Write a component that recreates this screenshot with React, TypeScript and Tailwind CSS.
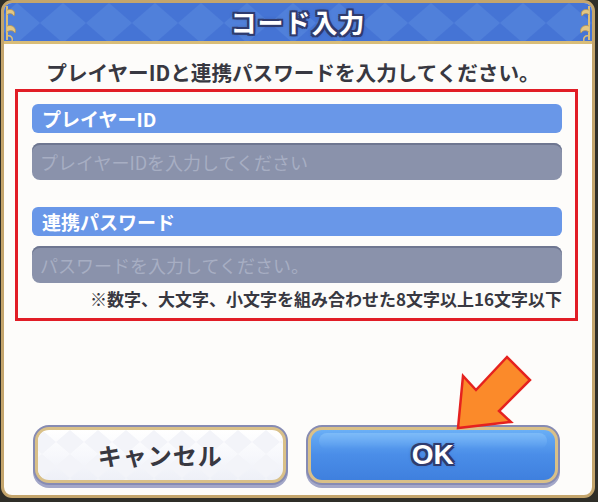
const outline =
  "[text-shadow:2px_0_0_#2f3b6e,-2px_0_0_#2f3b6e,0_2px_0_#2f3b6e,0_-2px_0_#2f3b6e,2px_2px_0_#2f3b6e,-2px_-2px_0_#2f3b6e,2px_-2px_0_#2f3b6e,-2px_2px_0_#2f3b6e,0_0_4px_#2f3b6e]";

function Ornament({ flip }: { flip?: boolean }) {
  return (
    <svg
      width="16"
      height="38"
      viewBox="0 0 16 38"
      className={`absolute top-[1px] ${flip ? "right-0 -scale-x-100" : "left-0"}`}
    >
      <path d="M3 2 L3 36" stroke="#d9bd78" strokeWidth="2" fill="none" />
      <path d="M3 6 C9 4 12 8 10 12 C8 9 5 9 3 11" fill="#e2c784" stroke="#b89550" strokeWidth="0.8" />
      <path d="M3 22 C8 20 13 24 11 29 C9 26 6 26 3 28" fill="#e2c784" stroke="#b89550" strokeWidth="0.8" />
      <path d="M3 32 C7 31 9 34 8 37" fill="none" stroke="#d9bd78" strokeWidth="1.5" />
    </svg>
  );
}

function Diamonds({ id, color, w = 46, h = 40 }: { id: string; color: string; w?: number; h?: number }) {
  return (
    <svg className="absolute inset-0 w-full h-full" preserveAspectRatio="none">
      <defs>
        <pattern id={id} width={w} height={h} patternUnits="userSpaceOnUse" x="-10">
          <polygon points={`${w / 2},0 ${w},${h / 2} ${w / 2},${h} 0,${h / 2}`} fill={color} />
        </pattern>
      </defs>
      <rect width="100%" height="100%" fill={`url(#${id})`} />
    </svg>
  );
}

function Field({ label, placeholder }: { label: string; placeholder: string }) {
  return (
    <div className="flex flex-col">
      <div className="h-[29px] rounded-[6px] bg-[#6997e8] pl-[10px] flex items-center text-[19px] font-bold text-white leading-none">
        {label}
      </div>
      <input
        readOnly
        placeholder={placeholder}
        className="mt-[10px] h-[37px] rounded-[8px] bg-[#8a92ab] pl-[8px] text-[18px] text-white placeholder:text-[#a7aec3] outline-none shadow-[inset_0_2px_0_#6e7690] font-['Noto_Sans_CJK_JP',sans-serif]"
      />
    </div>
  );
}

export default function App() {
  return (
    <div className="relative w-[598px] h-[502px] bg-[#2f2e28] font-['Noto_Sans_CJK_JP',sans-serif] text-[#383841]">
      <div className="ml-[1px] w-[594px] h-[498px] flex flex-col rounded-[11px] border-[3px] border-[#c4a56c] bg-[#fdfcfa] overflow-hidden">
        {/* title bar */}
        <div className="relative h-[41px] shrink-0 bg-[#4574d5] border-b-[3px] border-[#d9bd78] flex items-center justify-center overflow-hidden">
          <Diamonds id="hdr" color="#5080da" />
          <Ornament />
          <Ornament flip />
          <h1 className={`relative text-[26px] font-bold text-white leading-none tracking-[1px] ${outline}`}>
            コード入力
          </h1>
        </div>

        <div className="flex-1 flex flex-col">
          <p className="mt-[14px] text-center text-[20.6px] font-bold leading-[28px] pr-[10px]">
            プレイヤーIDと連携パスワードを入力してください。
          </p>

          <div className="mt-[3px] ml-[11px] mr-[14px] border-[3px] border-[#e11d26] pt-[12px] pb-[6px] pl-[14px] pr-[13px] flex flex-col">
            <Field label="プレイヤーID" placeholder="プレイヤーIDを入力してください" />
            <div className="h-[27px]" />
            <Field label="連携パスワード" placeholder="パスワードを入力してください。" />
            <p className="mt-[3px] text-right text-[17px] font-bold leading-[26px]">
              ※数字、大文字、小文字を組み合わせた8文字以上16文字以下
            </p>
          </div>

          <div className="mt-auto mb-[10px] ml-[29px] mr-[32px] flex gap-[18px]">
            <button className="flex-1 h-[60px] rounded-[16px] bg-[#868bb3] p-[2px] shadow-[0_3px_0_#a3a7c8]">
              <div className="relative h-full rounded-[14px] border-[3px] border-[#d9c088] bg-gradient-to-b from-[#ffffff] via-[#f7f8fc] to-[#eef0f7] overflow-hidden flex items-center justify-center">
                <Diamonds id="cnl" color="#f3f4f9" w={28} h={24} />
                <span className="relative text-[24px] font-bold text-[#383841] tracking-[1px] leading-none">
                  キャンセル
                </span>
              </div>
            </button>
            <button className="flex-1 h-[60px] rounded-[16px] bg-[#868bb3] p-[2px] shadow-[0_3px_0_#a3a7c8]">
              <div className="relative h-full rounded-[14px] border-[3px] border-[#d9c088] bg-gradient-to-b from-[#6aaff6] via-[#4a8de8] to-[#3f80de] overflow-hidden flex items-center justify-center">
                <div className="absolute left-[8px] right-[8px] top-[3px] h-[16px] rounded-[8px] bg-gradient-to-b from-[#9fd3ff]/40 to-transparent" />
                <span className={`relative text-[28px] font-bold text-white leading-none font-['Liberation_Sans',sans-serif] ${outline}`}>
                  OK
                </span>
              </div>
            </button>
          </div>
        </div>
      </div>

      <svg className="absolute left-0 top-0 pointer-events-none" width="598" height="502">
        <polygon
          points="458,428 463,376 476,390 507,357 530,380 499,411 511,422"
          fill="#fb8a2a"
          stroke="#e5221f"
          strokeWidth="2.5"
          strokeLinejoin="miter"
        />
      </svg>
    </div>
  );
}
